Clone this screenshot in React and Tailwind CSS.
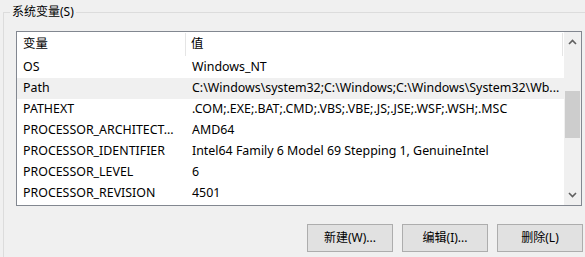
import React from "react";

const rows = [
  ["OS", "Windows_NT"],
  ["Path", "C:\\Windows\\system32;C:\\Windows;C:\\Windows\\System32\\Wb..."],
  ["PATHEXT", ".COM;.EXE;.BAT;.CMD;.VBS;.VBE;.JS;.JSE;.WSF;.WSH;.MSC"],
  ["PROCESSOR_ARCHITECT...", "AMD64"],
  ["PROCESSOR_IDENTIFIER", "Intel64 Family 6 Model 69 Stepping 1, GenuineIntel"],
  ["PROCESSOR_LEVEL", "6"],
  ["PROCESSOR_REVISION", "4501"],
];

const font = { fontFamily: '"Noto Sans", "Noto Sans CJK SC", sans-serif' };

function Chevron({ up }) {
  return (
    <svg width="9" height="6" viewBox="0 0 9 6">
      <polyline
        points={up ? "1,5 4.5,1.5 8,5" : "1,1 4.5,4.5 8,1"}
        fill="none"
        stroke="#606060"
        strokeWidth="1.6"
      />
    </svg>
  );
}

function Button({ children }) {
  return (
    <button className="w-[86px] h-[28px] bg-[#e1e1e1] border border-[#adadad] text-[12px] text-black flex items-center justify-center">
      {children}
    </button>
  );
}

export default function App() {
  return (
    <div
      className="w-[585px] h-[257px] bg-[#f0f0f0] overflow-hidden text-[12px] text-black"
      style={font}
    >
      <fieldset className="mt-[4px] ml-[3px] w-[600px] h-[300px] border border-[#dcdcdc]">
        <legend className="ml-[6px] px-[2px] leading-[16px]">系统变量(S)</legend>
        <div className="ml-[12px] mt-[11px] w-[566px] h-[175px] border border-[#828790] bg-white flex text-[12.4px]">
          <div className="flex-1 flex flex-col min-w-0">
            <div className="h-[25px] flex items-stretch shrink-0">
              <div className="w-[169px] shrink-0 flex items-center pl-[6px] border-r border-[#e5e5e5] my-[1px]">
                变量
              </div>
              <div className="w-[377px] shrink-0 flex items-center pl-[5px] border-r border-[#e5e5e5] my-[1px]">
                值
              </div>
            </div>
            {rows.map(([k, v], i) => (
              <div
                key={k}
                className={`h-[21px] flex items-center shrink-0 ${i === 1 ? "bg-[#f0f0f0]" : ""}`}
              >
                <div className="w-[169px] shrink-0 pl-[6px] whitespace-nowrap">
                  {k}
                </div>
                <div className="w-[377px] shrink-0 pl-[6px] whitespace-nowrap">
                  {v}
                </div>
              </div>
            ))}
          </div>
          <div className="w-[17px] shrink-0 bg-[#f0f0f0] flex flex-col items-center">
            <div className="h-[18px] w-full flex items-center justify-center mt-[1px]">
              <Chevron up />
            </div>
            <div className="h-[40px]" />
            <div className="w-[15px] h-[47px] bg-[#cdcdcd]" />
            <div className="flex-1" />
            <div className="h-[18px] w-full flex items-center justify-center mb-[1px]">
              <Chevron />
            </div>
          </div>
        </div>
        <div className="w-[579px] mt-[18px] flex justify-end gap-[9px]">
          <Button>新建(W)...</Button>
          <Button>编辑(I)...</Button>
          <Button>删除(L)</Button>
        </div>
      </fieldset>
    </div>
  );
}
